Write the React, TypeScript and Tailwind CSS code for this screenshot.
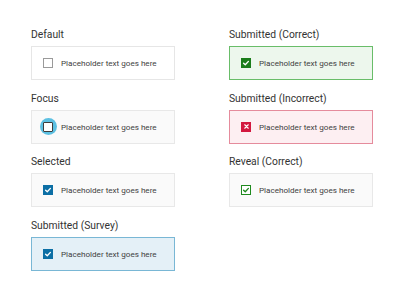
import React from "react";

type Variant =
  | "default"
  | "focus"
  | "selected"
  | "survey"
  | "correct"
  | "incorrect"
  | "reveal";

const cardStyles: Record<Variant, string> = {
  default: "bg-white border-[#e6e6e6]",
  focus: "bg-[#fafafa] border-[#e8e8e8]",
  selected: "bg-[#fafafa] border-[#e8e8e8]",
  survey: "bg-[#e4f0f7] border-[#79b7d5]",
  correct: "bg-[#edf7ed] border-[#69bd69]",
  incorrect: "bg-[#fdeff2] border-[#e58b9c]",
  reveal: "bg-[#fafafa] border-[#e8e8e8]",
};

function Check({ color }: { color: string }) {
  return (
    <svg viewBox="0 0 10 10" className="w-[8px] h-[8px]" fill="none">
      <path
        d="M2 5.2 L4.1 7.2 L8 3"
        stroke={color}
        strokeWidth="1.7"
        strokeLinecap="round"
        strokeLinejoin="round"
      />
    </svg>
  );
}

function Box({ variant }: { variant: Variant }) {
  if (variant === "default") {
    return <div className="w-[10px] h-[10px] border border-[#9a9a9a] bg-white" />;
  }
  if (variant === "focus") {
    return (
      <div className="relative w-[10px] h-[10px]">
        <div className="absolute -left-[3.5px] -top-[3.5px] w-[17px] h-[17px] rounded-full bg-[#5cc0e2]" />
        <div className="absolute inset-0 border border-[#3d3d3d] bg-white rounded-[1px]" />
      </div>
    );
  }
  if (variant === "selected" || variant === "survey") {
    return (
      <div className="w-[10px] h-[10px] bg-[#0c6fa5] flex items-center justify-center">
        <Check color="#ffffff" />
      </div>
    );
  }
  if (variant === "correct") {
    return (
      <div className="w-[10px] h-[10px] bg-[#1b7d1b] flex items-center justify-center">
        <Check color="#ffffff" />
      </div>
    );
  }
  if (variant === "incorrect") {
    return (
      <div className="w-[10px] h-[10px] bg-[#d3183f] flex items-center justify-center">
        <svg viewBox="0 0 10 10" className="w-[7px] h-[7px]" fill="none">
          <path d="M2.5 2.5 L7.5 7.5 M7.5 2.5 L2.5 7.5" stroke="#ffffff" strokeWidth="1.6" strokeLinecap="round" />
        </svg>
      </div>
    );
  }
  return (
    <div className="w-[10px] h-[10px] border border-[#1f8a1f] bg-white flex items-center justify-center">
      <Check color="#1f8a1f" />
    </div>
  );
}

function Item({ label, variant }: { label: string; variant: Variant }) {
  return (
    <div className="flex flex-col">
      <div className="h-[14px] text-[10.3px] leading-[14px] text-[#333]">{label}</div>
      <div
        className={`mt-[4px] h-[34px] border flex items-center pl-[11px] ${cardStyles[variant]}`}
      >
        <Box variant={variant} />
        <span className="ml-[8px] text-[8.1px] text-[#3f3f3f]">Placeholder text goes here</span>
      </div>
    </div>
  );
}

export default function App() {
  return (
    <div
      className="w-[400px] h-[300px] bg-white pt-[28px] pl-[31px]"
      style={{ fontFamily: "Roboto, 'Noto Sans', sans-serif" }}
    >
      <div className="grid grid-cols-[144px_144px] gap-x-[54px] gap-y-[11.6px]">
        <Item label="Default" variant="default" />
        <Item label="Submitted (Correct)" variant="correct" />
        <Item label="Focus" variant="focus" />
        <Item label="Submitted (Incorrect)" variant="incorrect" />
        <Item label="Selected" variant="selected" />
        <Item label="Reveal (Correct)" variant="reveal" />
        <Item label="Submitted (Survey)" variant="survey" />
      </div>
    </div>
  );
}
